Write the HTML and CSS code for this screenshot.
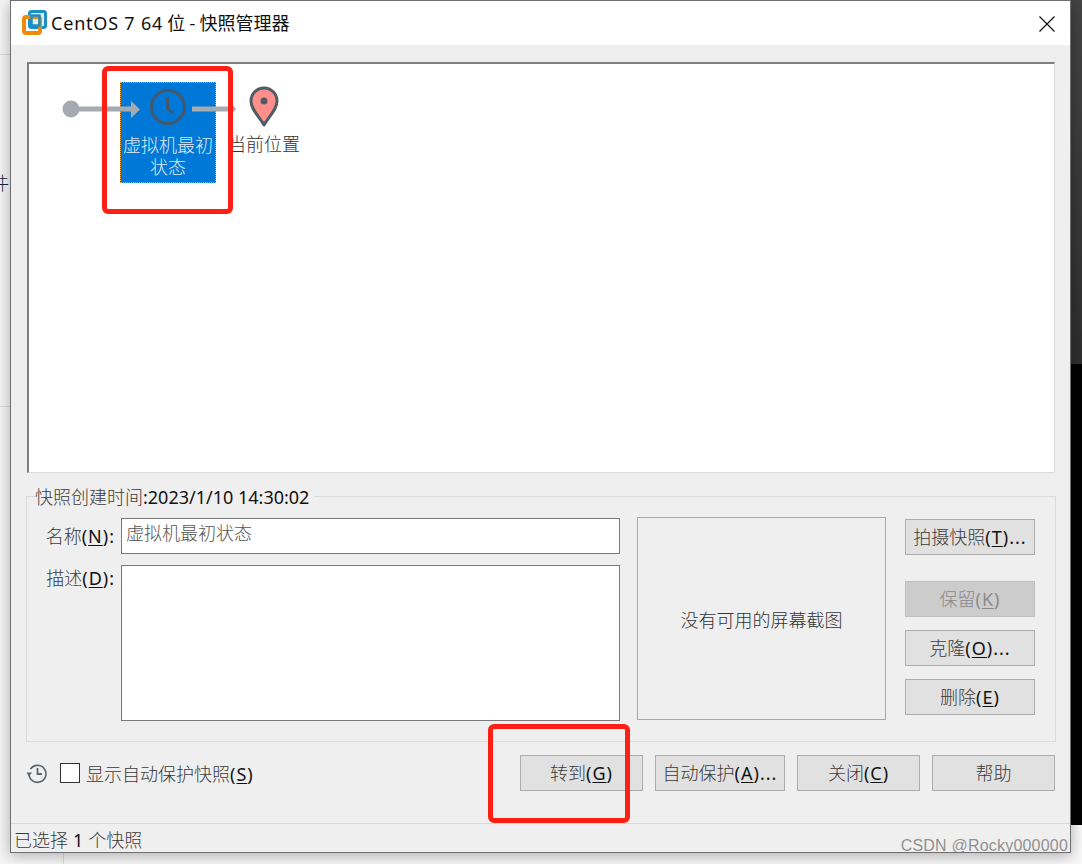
FILE: index.html
```html
<!DOCTYPE html>
<html lang="zh-CN">
<head>
    <meta charset="UTF-8">
    <title>CentOS 7 64 位 - 快照管理器</title>
    <link rel="stylesheet" href="styles.css">
</head>
<body>

    <!-- what shows behind the dialog -->
    <div class="back-left">
        <div class="back-line back-line-1"></div>
        <div class="back-word">件</div>
        <div class="back-line back-line-2"></div>
    </div>
    <div class="back-right"></div>
    <div class="back-tick"></div>

    <div class="dialog">
        <div class="titlebar">
            <svg class="logo" width="26" height="26" viewBox="0 0 26 26">
                <rect x="7.5" y="1.5" width="16" height="16" rx="2" fill="#d9eef8" stroke="#1c8ec4" stroke-width="3"/>
                <rect x="2" y="7" width="16" height="16" rx="2" fill="none" stroke="#f08a0a" stroke-width="4"/>
                <path d="M9.5 5.5h8a2 2 0 0 1 0 0v10h-8z" fill="none" stroke="#1c8ec4" stroke-width="2.5"/>
            </svg>
            <span class="title"><span class="lat-big">CentOS 7 64</span> 位 - 快照管理器</span>
            <svg class="close" width="16" height="16" viewBox="0 0 16 16">
                <path d="M0.5 0.5L15.5 15.5M15.5 0.5L0.5 15.5" stroke="#111" stroke-width="1.2" fill="none"/>
            </svg>
        </div>

        <div class="tree">
            <div class="node node-selected">
                <svg class="clock" width="38" height="38" viewBox="0 0 38 38">
                    <circle cx="19" cy="19" r="16.500" fill="none" stroke="#45586b" stroke-width="3"/>
                    <path d="M18.500 9V20L24 25" fill="none" stroke="#45586b" stroke-width="3"/>
                </svg>
                <div class="node-label">虚拟机最初状态</div>
            </div>
            <svg class="tree-lines" width="230" height="60" viewBox="0 0 230 60">
                <circle cx="43" cy="45" r="8.5" fill="#a5abb1"/>
                <path d="M43 45H103" stroke="#a5abb1" stroke-width="5"/>
                <path d="M103 37L112 45.500L103 54z" fill="#a5abb1"/>
            </svg>
            <svg class="tree-arrow" width="46" height="24" viewBox="0 0 46 24">
                <path d="M0 12H36" stroke="#a5abb1" stroke-width="5"/>
                <path d="M36 3L44 12L36 21z" fill="#a5abb1"/>
            </svg>
            <svg class="pin" width="30" height="42" viewBox="0 0 30 42">
                <path d="M15 39C10 30 2 24 2 15a13 13 0 0 1 26 0C28 24 20 30 15 39z" fill="#ff8f8a" stroke="#4f5b66" stroke-width="3" stroke-linejoin="round"/>
                <circle cx="15" cy="15" r="3.500" fill="#4f5b66"/>
            </svg>
            <div class="here-label">当前位置</div>
        </div>

        <div class="group">
            <div class="group-title">快照创建时间<span class="lat">:2023/1/10 14:30:02</span></div>
            <div class="form-col">
                <div class="form-row">
                    <label class="form-label label-name" for="snap-name">名称<span class="lat key">(<u>N</u>):</span></label>
                    <input class="name-input" id="snap-name" type="text" value="虚拟机最初状态">
                </div>
                <div class="form-row">
                    <label class="form-label label-desc" for="snap-desc">描述<span class="lat key">(<u>D</u>):</span></label>
                    <textarea class="desc-input" id="snap-desc"></textarea>
                </div>
            </div>
            <div class="shot">没有可用的屏幕截图</div>
            <div class="side-col">
                <button class="btn btn-take">拍摄快照<span class="lat key">(<u>T</u>)...</span></button>
                <button class="btn btn-disabled">保留<span class="lat key">(<u>K</u>)</span></button>
                <button class="btn">克隆<span class="lat key">(<u>O</u>)...</span></button>
                <button class="btn">删除<span class="lat key">(<u>E</u>)</span></button>
            </div>
        </div>

        <div class="footer">
            <svg class="history" width="22" height="22" viewBox="0 0 22 22">
                <path d="M4.500 7A8.500 8.500 0 1 1 3 12" fill="none" stroke="#5a6570" stroke-width="1.600"/>
                <path d="M0.500 10.500H6L3 14.500z" fill="#5a6570"/>
                <path d="M11.500 6V12H16" fill="none" stroke="#5a6570" stroke-width="1.800"/>
            </svg>
            <input class="check" id="show-auto" type="checkbox">
            <label class="check-label" for="show-auto">显示自动保护快照<span class="lat key">(<u>S</u>)</span></label>
            <div class="footer-btns">
                <button class="btn btn-go">转到<span class="lat key">(<u>G</u>)</span></button>
                <button class="btn btn-auto">自动保护<span class="lat key">(<u>A</u>)...</span></button>
                <button class="btn btn-go">关闭<span class="lat key">(<u>C</u>)</span></button>
                <button class="btn btn-go">帮助</button>
            </div>
        </div>

        <div class="statusbar">已选择 <span class="lat">1</span> 个快照</div>
        <div class="watermark">CSDN @Rocky000000</div>
    </div>

    <!-- red marks drawn on the screenshot -->
    <div class="mark mark-node"></div>
    <div class="mark mark-goto"></div>

</body>
</html>
```

FILE: styles.css
```css
html, body {
    margin: 0;
    height: 100%;
}

body {
    position: relative;
    overflow: hidden;
    background-color: #f8f8f8;
    font-family: "Noto Sans CJK SC", "Noto Sans", sans-serif;
    font-size: 18px;
    font-weight: 300;
    color: #3a3a3a;
}

.lat {
    font-family: "Noto Sans", sans-serif;
    font-size: 18px;
    font-weight: 450;
    color: #111;
}

.key {
    letter-spacing: 1px;
}

.lat-big {
    font-family: "Noto Sans", sans-serif;
    font-weight: 400;
    letter-spacing: 0.8px;
}

u {
    text-underline-offset: 2px;
}

.back-left {
    position: absolute;
    left: 0;
    top: 0;
    width: 10px;
    height: 864px;
    background-color: #f5f5f5;
    overflow: hidden;
}

.back-line {
    position: absolute;
    left: 0;
    width: 10px;
    height: 1px;
    background-color: #dcdcdc;
}

.back-line-1 {
    top: 54px;
}

.back-line-2 {
    top: 406px;
}

.back-word {
    position: absolute;
    left: -9px;
    top: 170px;
    line-height: 24px;
    color: #16213a;
}

.back-right {
    position: absolute;
    left: 1071px;
    top: 0;
    width: 11px;
    height: 825px;
    background: linear-gradient(180deg, #444 0, #2e2e2e 364px, #000 364px, #000 100%);
}

.back-tick {
    position: absolute;
    left: 63px;
    top: 853px;
    width: 1px;
    height: 11px;
    background-color: #dcdcdc;
}

.dialog {
    position: absolute;
    left: 10px;
    top: 0;
    width: 1059px;
    height: 851px;
    border: 1px solid #6f6f6f;
    background-color: #efefef;
    box-shadow: 0 3px 14px rgba(0, 0, 0, 0.3);
    overflow: hidden;
}

.titlebar {
    display: flex;
    align-items: center;
    height: 44px;
    padding: 0 15px 0 11px;
    background-color: #fff;
}

.logo {
    flex: none;
}

.title {
    margin-left: 3px;
    margin-top: -2px;
    font-weight: 400;
    color: #111;
}

.close {
    flex: none;
    margin-left: auto;
    margin-top: 1px;
}

.tree {
    position: relative;
    height: 408px;
    margin: 17px 15px 0 16px;
    background-color: #fff;
    border-top: 2px solid #7f7f7f;
    border-left: 2px solid #7f7f7f;
    border-right: 1px solid #dcdcdc;
    border-bottom: 1px solid #dcdcdc;
}

/* the tree is a small free canvas: nodes sit at their own place */
.tree-lines {
    position: absolute;
    left: -1px;
    top: 0;
}

.node {
    position: absolute;
    left: 91px;
    top: 18px;
    width: 94px;
    height: 99px;
    text-align: center;
    border: 1px dotted #f0a030;
    background-color: #0078d7;
}

.clock {
    display: block;
    margin: 5px 0 0 28px;
}

.node-label {
    margin-top: 7px;
    line-height: 22px;
    color: #dcebf8;
}

.tree-arrow {
    position: absolute;
    left: 163px;
    top: 33px;
}

.pin {
    position: absolute;
    left: 220px;
    top: 22px;
}

.here-label {
    position: absolute;
    left: 199px;
    top: 68px;
    line-height: 22px;
    white-space: nowrap;
    color: #333;
}

.group {
    position: relative;
    display: flex;
    align-items: flex-start;
    box-sizing: border-box;
    width: 1030px;
    height: 246px;
    margin: 23px 0 0 15px;
    padding: 20px 0 0 0;
    border: 1px solid #dcdcdc;
}

.group-title {
    position: absolute;
    left: 8px;
    top: -12px;
    padding-right: 5px;
    line-height: 22px;
    background-color: #efefef;
}

.form-col {
    width: 593px;
    margin-top: 1px;
}

.form-row {
    display: flex;
    margin-bottom: 11px;
}

.form-label {
    box-sizing: border-box;
    width: 94px;
    padding-right: 6px;
    text-align: right;
    white-space: nowrap;
}

.label-name {
    height: 36px;
    line-height: 34px;
}

.label-desc {
    line-height: 24px;
}

.name-input, .desc-input {
    box-sizing: border-box;
    width: 499px;
    margin: 0;
    padding: 0 4px;
    border: 1px solid #7a7a7a;
    border-radius: 0;
    background-color: #fff;
    font-family: inherit;
    font-size: 18px;
    font-weight: 300;
    color: #555;
    outline: none;
    resize: none;
}

.name-input {
    height: 36px;
    padding-bottom: 8px;
}

.desc-input {
    display: block;
    height: 156px;
}

.shot {
    box-sizing: border-box;
    display: flex;
    align-items: center;
    justify-content: center;
    width: 249px;
    height: 203px;
    margin-left: 17px;
    border: 1px solid #a8a8a8;
    color: #333;
}

.side-col {
    display: flex;
    flex-direction: column;
    gap: 13px;
    width: 130px;
    margin: 2px 0 0 19px;
}

.btn {
    box-sizing: border-box;
    height: 36px;
    margin: 0;
    padding: 0 0 2px;
    border: 1px solid #adadad;
    border-radius: 0;
    background-color: #e1e1e1;
    font-family: inherit;
    font-size: 18px;
    font-weight: 300;
    color: #3a3a3a;
    white-space: nowrap;
}

.btn-take {
    margin-bottom: 13px;
}

.btn-disabled {
    border-color: #bfbfbf;
    background-color: #ccc;
    color: #8a8a8a;
}

.btn-disabled .lat {
    font-weight: 400;
    color: #8a8a8a;
}

.footer {
    box-sizing: border-box;
    display: flex;
    align-items: center;
    height: 81px;
    padding: 0 15px 20px 15px;
}

.history {
    flex: none;
}

.check {
    appearance: none;
    box-sizing: border-box;
    flex: none;
    width: 20px;
    height: 20px;
    margin: 0 0 0 12px;
    border: 1px solid #333;
    background-color: #fff;
}

.check-label {
    margin-left: 6px;
    white-space: nowrap;
}

.footer-btns {
    display: flex;
    gap: 12px;
    margin-left: auto;
}

.btn-go {
    width: 123px;
}

.btn-auto {
    width: 130px;
}

.statusbar {
    height: 28px;
    padding-left: 3px;
    border-top: 1px solid #d9d9d9;
    line-height: 30px;
    white-space: pre;
    word-spacing: 1px;
}

.watermark {
    position: absolute;
    right: 2px;
    bottom: -4px;
    font-family: "Liberation Sans", sans-serif;
    font-size: 16px;
    line-height: 20px;
    letter-spacing: 0.2px;
    color: rgba(110, 110, 110, 0.75);
    white-space: nowrap;
}

.mark {
    position: absolute;
    box-sizing: border-box;
    border: 5px solid #ff2015;
    border-radius: 6px;
}

.mark-node {
    left: 102px;
    top: 66px;
    width: 131px;
    height: 148px;
}

.mark-goto {
    left: 488px;
    top: 724px;
    width: 142px;
    height: 99px;
}
```
